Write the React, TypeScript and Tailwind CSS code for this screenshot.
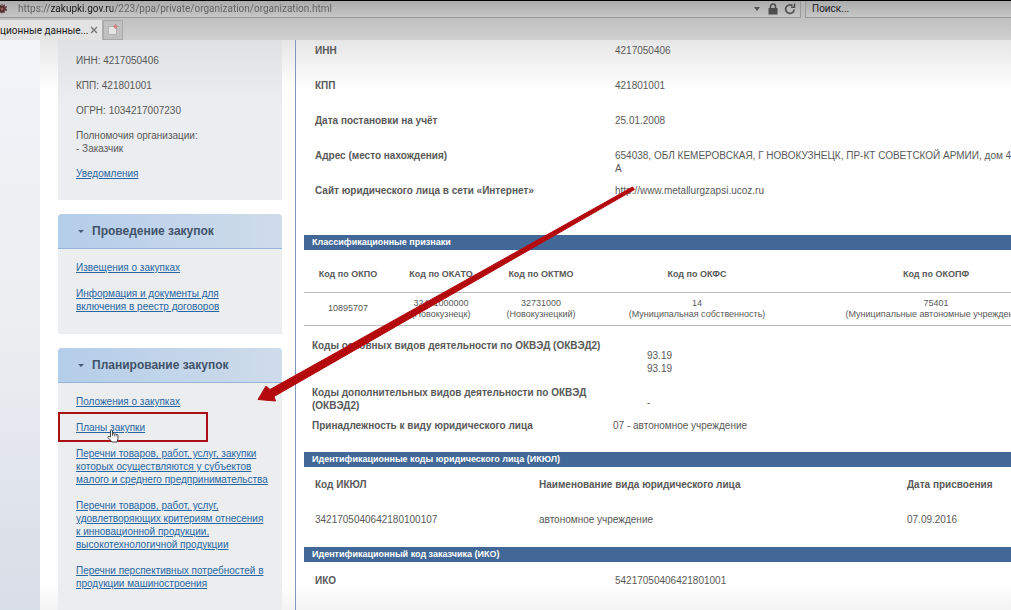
import React from "react";

const procurementLinks = ["Извещения о закупках", "Информация и документы для\nвключения в реестр договоров"];

const planningLinks = [
  "Положения о закупках",
  "Планы закупки",
  "Перечни товаров, работ, услуг, закупки\nкоторых осуществляются у субъектов\nмалого и среднего предпринимательства",
  "Перечни товаров, работ, услуг,\nудовлетворяющих критериям отнесения\nк инновационной продукции,\nвысокотехнологичной продукции",
  "Перечни перспективных потребностей в\nпродукции машиностроения",
];

const details = [
  ["ИНН", "4217050406"],
  ["КПП", "421801001"],
  ["Дата постановки на учёт", "25.01.2008"],
  ["Адрес (место нахождения)", "654038, ОБЛ КЕМЕРОВСКАЯ, Г НОВОКУЗНЕЦК, ПР-КТ СОВЕТСКОЙ АРМИИ, дом 4\nА"],
  ["Сайт юридического лица в сети «Интернет»", "http://www.metallurgzapsi.ucoz.ru"],
];

const codes = [
  { name: "Код по ОКПО", value: "10895707" },
  { name: "Код по ОКАТО", value: "32431000000\n(Новокузнецк)" },
  { name: "Код по ОКТМО", value: "32731000\n(Новокузнецкий)" },
  { name: "Код по ОКФС", value: "14\n(Муниципальная собственность)" },
  { name: "Код по ОКОПФ", value: "75401\n(Муниципальные автономные учреждения)" },
];

function Browser() {
  return (
    <header className="border-t border-black bg-linear-to-b from-[#b4b4b4] to-[#d0d0d0] font-[Roboto,'Noto_Sans',sans-serif] text-[#222]">
      <div className="flex h-[17px] gap-1">
        <div className="flex min-w-0 flex-1 items-center border-r border-b border-[#989898] bg-linear-to-b from-[#acacac] to-[#c6c6c6] pr-1">
          <svg className="-ml-1 size-3 shrink-0" viewBox="0 0 12 12" fill="#5a3434" aria-hidden="true">
            <path d="M5.500 1h1v2L8 1.500l1 .5-.5 2 2-1 .5 1-1.500 1.500L11 6l-.5 2-2-.5L9 9.500l-1.500.5L7 9l-1 2-1-2-.5 1L3 9.500l.5-2-2 .5L1 6l1.500-.5L1 4l.5-1 2 1L3 2l1-.5L5.500 3z" />
            <circle cx="6" cy="6" r="1.300" fill="#a65a5a" />
          </svg>
          <input
            aria-label="Адрес"
            className="ml-[10px] min-w-0 flex-1 bg-[linear-gradient(90deg,#606060_33px,#151515_33px,#151515_95px,#606060_95px)] bg-clip-text text-[10px] leading-4 text-transparent outline-none"
            defaultValue="https://zakupki.gov.ru/223/ppa/private/organization/organization.html"
          />
          <button aria-label="Журнал адресов" className="mr-2">
            <svg className="h-1 w-1.5" viewBox="0 0 6 4" fill="#505050"><path d="M0 0h6L3 4z" /></svg>
          </button>
          <svg className="mr-1.5 h-3 w-2.5" viewBox="0 0 10 12" aria-hidden="true">
            <path d="M2.500 6V3.500a2.500 2.500 0 0 1 5 0V6" fill="none" stroke="#4c4c4c" strokeWidth="1.500" />
            <rect x="0.500" y="5" width="9" height="6.500" fill="#4c4c4c" />
          </svg>
          <button aria-label="Обновить">
            <svg className="size-3" viewBox="0 0 12 12" fill="none" stroke="#505050" strokeWidth="1.700">
              <path d="M10.200 6.500A4.300 4.300 0 1 1 8.500 2.700" /><path d="M7 4.200h3.500V.5" strokeWidth="1.500" />
            </svg>
          </button>
        </div>
        <input
          aria-label="Поиск"
          placeholder="Поиск..."
          className="w-[206px] border-b border-l border-[#989898] bg-linear-to-b from-[#acacac] to-[#c6c6c6] pl-1.5 text-[10px] leading-4 outline-none placeholder:text-[#222]"
        />
      </div>
      <div className="flex h-[22px] items-end">
        <div className="flex h-5 w-[103px] items-center justify-between border-r border-[#b0b0b0] bg-[#e3e3e3] pr-1">
          <span className="text-[10px] whitespace-nowrap">ционные данные...</span>
          <button aria-label="Закрыть вкладку">
            <svg className="size-2" viewBox="0 0 8 8" stroke="#777" strokeWidth="1.400"><path d="M1 1l6 6M7 1L1 7" /></svg>
          </button>
        </div>
        <button aria-label="Новая вкладка" className="flex h-5 w-5 items-center justify-center border border-[#a8a8a8] bg-[#c0c0c0]">
          <svg className="size-3" viewBox="0 0 12 12" aria-hidden="true">
            <path d="M1.500 2.500h8v8h-8z" fill="#e4e4e4" stroke="#aaa" strokeWidth=".8" />
            <path d="M8.500 0v5M6 2.500h5M7 1l3 3M10 1L7 4" stroke="#cf7d7d" strokeWidth=".9" />
          </svg>
        </button>
      </div>
    </header>
  );
}

function SideLink({ text, marked }: { text: string; marked?: boolean }) {
  return (
    <li className="relative">
      <a href="#" className="whitespace-pre text-[#2667a3] underline">{text}</a>
      {marked && (
        <>
          <span className="absolute -top-[9px] -left-[18px] h-[30px] w-[150px] border-2 border-[#ab1015]" />
          <svg className="absolute top-2 left-[31px] h-3.5 w-3" viewBox="0 0 12 14" aria-hidden="true">
            <path d="M3.500 8V1.500q1-1 2 0V5q1-.8 1.800.2 1-.7 1.800.3 1.200-.5 1.900.7V9.500L10 13H5L1 8.500q0-1.500 1.300-1z" fill="#fff" stroke="#333" strokeWidth=".9" />
            <path d="M5.500 5v2M7.300 5.500v2M9.200 6v1.500" stroke="#333" strokeWidth=".7" />
          </svg>
        </>
      )}
    </li>
  );
}

function SidePanel({ title, links, className }: { title: string; links: string[]; className: string }) {
  return (
    <section className={className + " rounded-t-sm bg-[#ecedef]"}>
      <h2 className="rounded-t-sm border-b border-[#94b4d6] bg-linear-to-r from-[#b4cdea] to-[#cfdcea] text-[12px] font-bold text-[#42536a]">
        <button className="flex h-[34px] w-full items-center gap-2 pl-5">
          <svg className="h-[3px] w-1.5" viewBox="0 0 6 3" fill="#4a5c74" aria-hidden="true"><path d="M0 0h6L3 3z" /></svg>
          {title}
        </button>
      </h2>
      <ul className="flex flex-col gap-[13px] px-[18px] pt-3">
        {links.map((t) => <SideLink key={t} text={t} marked={t === "Планы закупки"} />)}
      </ul>
    </section>
  );
}

function Bar({ children }: { children: React.ReactNode }) {
  return <h2 className="bg-[#426897] pl-2 text-[9px] leading-[15px] font-bold text-white">{children}</h2>;
}

export default function App() {
  return (
    <div className="relative flex min-h-screen flex-col overflow-hidden bg-white font-['Liberation_Sans',Arial,sans-serif] text-[10px] leading-[13px] text-[#595959]">
      <Browser />
      <div className="flex flex-1 bg-[linear-gradient(#e6e6e6,#fff_50px,#fff_calc(100%-25px),#f3f3f3)]">
        <div className="w-10 shrink-0 bg-linear-to-b from-[#f1f3f8] via-[#eceef1] to-[#d8dee8]" />
        <aside className="mr-3 ml-[18px] flex w-[225px] shrink-0 flex-col pr-px">
          <section className="flex h-[160px] flex-col gap-3 bg-linear-to-b from-[#dfe1e3] to-[#ecedf0] to-40% px-[18px] pt-3.5">
            <p>ИНН: 4217050406</p>
            <p>КПП: 421801001</p>
            <p>ОГРН: 1034217007230</p>
            <p>Полномочия организации:<br />- Заказчик</p>
            <p><a href="#" className="text-[#2667a3] underline">Уведомления</a></p>
          </section>
          <SidePanel title="Проведение закупок" links={procurementLinks} className="mt-3.5 h-[120px]" />
          <SidePanel title="Планирование закупок" links={planningLinks} className="mt-3.5 flex-1" />
        </aside>
        <main className="min-w-0 flex-1 overflow-hidden border-l border-[#8098ba] pl-2">
          <div className="min-w-[766px]">
            <dl className="h-[195px] pt-1">
              {details.map(([name, value]) => (
                <div key={name} className="flex h-[35px] pl-[11px]">
                  <dt className="w-[300px] shrink-0 font-bold">{name}</dt>
                  <dd className="whitespace-pre">{value}</dd>
                </div>
              ))}
            </dl>
            <Bar>Классификационные признаки</Bar>
            <table className="w-full table-fixed border-collapse text-center text-[9px] leading-[11px]">
              <colgroup>
                <col className="w-[88px]" /><col className="w-[98px]" /><col className="w-[102px]" /><col className="w-[210px]" /><col />
              </colgroup>
              <thead>
                <tr className="h-[42px] border-b border-[#bbb]">
                  {codes.map((c) => <th key={c.name} className="pt-2 font-bold">{c.name}</th>)}
                </tr>
              </thead>
              <tbody>
                <tr className="h-[33px] border-b border-[#bbb]">
                  {codes.map((c) => <td key={c.name} className="whitespace-pre">{c.value}</td>)}
                </tr>
              </tbody>
            </table>
            <dl className="h-[126px] pt-[13px] pl-2">
              <div className="flex h-[47px]">
                <dt className="w-[335px] font-bold">Коды основных видов деятельности по ОКВЭД (ОКВЭД2)</dt>
                <dd className="pt-2.5">93.19<br />93.19</dd>
              </div>
              <div className="flex h-[33px]">
                <dt className="w-[335px] font-bold">Коды дополнительных видов деятельности по ОКВЭД<br />(ОКВЭД2)</dt>
                <dd className="pt-2.5">-</dd>
              </div>
              <div className="flex">
                <dt className="w-[301px] font-bold">Принадлежность к виду юридического лица</dt>
                <dd>07 - автономное учреждение</dd>
              </div>
            </dl>
            <Bar>Идентификационные коды юридического лица (ИКЮЛ)</Bar>
            <table className="w-full table-fixed text-left">
              <colgroup><col className="w-[235px]" /><col className="w-[368px]" /><col /></colgroup>
              <thead>
                <tr className="h-[35px]">
                  <th className="pl-[11px] font-bold">Код ИКЮЛ</th><th className="font-bold">Наименование вида юридического лица</th><th className="font-bold">Дата присвоения</th>
                </tr>
              </thead>
              <tbody>
                <tr className="h-[35px] align-middle">
                  <td className="pl-[11px]">3421705040642180100107</td><td>автономное учреждение</td><td>07.09.2016</td>
                </tr>
              </tbody>
            </table>
            <div className="h-[10px]" />
            <Bar>Идентификационный код заказчика (ИКО)</Bar>
            <dl className="flex pt-3 pl-[11px]">
              <dt className="w-[300px] font-bold">ИКО</dt>
              <dd>54217050406421801001</dd>
            </dl>
          </div>
        </main>
      </div>
      <svg className="pointer-events-none absolute top-[180px] left-[250px]" width="390" height="230" viewBox="250 180 390 230" aria-hidden="true">
        <path d="M632.500 187L634.500 189.500L274 396.500L275.500 401L258 399.500L266 386L270 389.500Z" fill="#b40a0e" stroke="#b40a0e" strokeWidth="1" strokeLinejoin="round" />
      </svg>
    </div>
  );
}
